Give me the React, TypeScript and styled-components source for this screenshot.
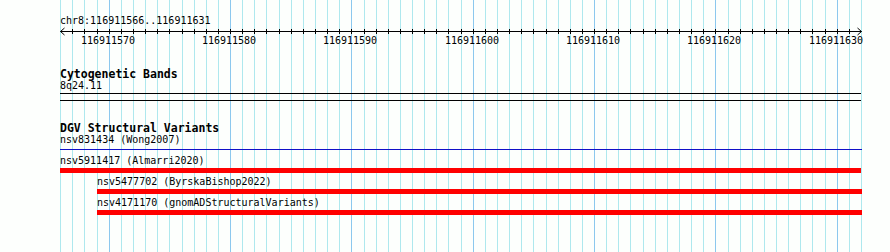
import React from "react";
import styled, { createGlobalStyle } from "styled-components";

const START = 116911566;
const END = 116911631;
const ORIGIN = 60.2;
const BP_PX = 12.133;
const VIEW_RIGHT = 862;

const bpX = (bp: number) => ORIGIN + (bp - START) * BP_PX;

const GlobalStyle = createGlobalStyle`
  html, body {
    margin: 0;
    padding: 0;
    background: #ffffff;
  }
  body {
    font-family: "DejaVu Sans Mono", "Liberation Mono", monospace;
    color: #000;
  }
`;

const Page = styled.div`
  position: relative;
  width: 890px;
  height: 252px;
  overflow: hidden;
  background: #fdfffd;
`;

const GridCanvas = styled.svg`
  position: absolute;
  left: 0;
  top: 0;
  width: 890px;
  height: 252px;
`;

const Tracks = styled.div`
  position: relative;
  z-index: 1;
  display: flex;
  flex-direction: column;
  align-items: flex-start;
`;

const RulerTrack = styled.div`
  display: flex;
  flex-direction: column;
  padding-top: 15px;
`;

const Locus = styled.div`
  padding-left: 60px;
  font-size: 10px;
  line-height: 12px;
  white-space: nowrap;
`;

const RulerDrawing = styled.svg`
  display: block;
  width: 890px;
  height: 19px;
`;

const Track = styled.div<{ $gap: number }>`
  display: flex;
  flex-direction: column;
  align-items: flex-start;
  margin-top: ${(p) => p.$gap}px;
`;

const TrackTitle = styled.div`
  padding-left: 60px;
  font-size: 11.5px;
  font-weight: bold;
  line-height: 12px;
  white-space: nowrap;
`;

const FeatureLabel = styled.div`
  font-size: 10px;
  line-height: 12px;
  white-space: nowrap;
`;

const BandLabel = styled(FeatureLabel)`
  padding-left: 60px;
`;

const BandBox = styled.div`
  margin: 1px 0 0 60px;
  width: 801px;
  height: 6px;
  border-top: 1px solid #000;
  border-bottom: 1px solid #000;
  background: transparent;
`;

const FeatureRow = styled.div`
  display: flex;
  flex-direction: column;
  height: 21px;
`;

const GlyphArea = styled.div`
  margin-top: 1px;
  height: 5px;
  display: flex;
  align-items: center;
`;

const Bar = styled.div<{ $kind: "bar" | "line" }>`
  width: 100%;
  height: ${(p) => (p.$kind === "bar" ? "5px" : "1px")};
  background: ${(p) => (p.$kind === "bar" ? "#ff0000" : "#1010c8")};
`;

type Variant = {
  name: string;
  source: string;
  start: number;
  end: number;
  kind: "bar" | "line";
};

const variants: Variant[] = [
  { name: "nsv831434", source: "Wong2007", start: START, end: END + 1.1, kind: "line" },
  { name: "nsv5911417", source: "Almarri2020", start: START, end: END + 1, kind: "bar" },
  { name: "nsv5477702", source: "ByrskaBishop2022", start: 116911569, end: END + 3, kind: "bar" },
  { name: "nsv4171170", source: "gnomADStructuralVariants", start: 116911569, end: END + 3, kind: "bar" },
];

const lineCount = END - START + 1;
const gridXs = Array.from({ length: lineCount + 1 }, (_, k) => ({
  x: Math.round(ORIGIN + k * BP_PX) + 0.5,
  major: (START + k) % 10 === 0,
}));

const majors = gridXs
  .map((g, k) => ({ ...g, bp: START + k }))
  .filter((g) => g.major);

function Grid() {
  return (
    <GridCanvas viewBox="0 0 890 252">
      {gridXs.map((g, i) => (
        <line
          key={i}
          x1={g.x}
          x2={g.x}
          y1={0}
          y2={252}
          stroke={g.major ? "#8cc8ee" : "#aee8ee"}
          strokeWidth={1}
        />
      ))}
    </GridCanvas>
  );
}

function Ruler() {
  const left = gridXs[0].x;
  const right = gridXs[gridXs.length - 1].x;
  return (
    <RulerDrawing viewBox="0 0 890 19">
      <line x1={left} x2={right} y1={4.5} y2={4.5} stroke="#000" strokeWidth={1} />
      {gridXs.slice(1, -1).map((g, i) => (
        <line key={i} x1={g.x} x2={g.x} y1={2} y2={7} stroke="#000" strokeWidth={1} />
      ))}
      <polyline
        points={`${left + 4},1 ${left},4.5 ${left + 4},8`}
        fill="none"
        stroke="#000"
        strokeWidth={1}
      />
      <polyline
        points={`${right - 4},1 ${right},4.5 ${right - 4},8`}
        fill="none"
        stroke="#000"
        strokeWidth={1}
      />
      {majors.map((m) => (
        <text
          key={m.bp}
          x={m.x - 1.5}
          y={16.5}
          textAnchor="middle"
          fontSize={10}
          fontFamily='"DejaVu Sans Mono", "Liberation Mono", monospace'
          fill="#000"
        >
          {m.bp}
        </text>
      ))}
    </RulerDrawing>
  );
}

export default function App() {
  return (
    <>
      <GlobalStyle />
      <Page>
        <Grid />
        <Tracks>
          <RulerTrack>
            <Locus>chr8:116911566..116911631</Locus>
            <Ruler />
          </RulerTrack>
          <Track $gap={22}>
            <TrackTitle>Cytogenetic Bands</TrackTitle>
            <BandLabel>8q24.11</BandLabel>
            <BandBox />
          </Track>
          <Track $gap={21}>
            <TrackTitle>DGV Structural Variants</TrackTitle>
            {variants.map((v) => {
              const x0 = Math.round(bpX(v.start));
              const x1 = Math.min(Math.round(bpX(v.end)), VIEW_RIGHT);
              return (
                <FeatureRow key={v.name} style={{ marginLeft: x0, width: x1 - x0 }}>
                  <FeatureLabel>
                    {v.name} ({v.source})
                  </FeatureLabel>
                  <GlyphArea>
                    <Bar $kind={v.kind} />
                  </GlyphArea>
                </FeatureRow>
              );
            })}
          </Track>
        </Tracks>
      </Page>
    </>
  );
}
